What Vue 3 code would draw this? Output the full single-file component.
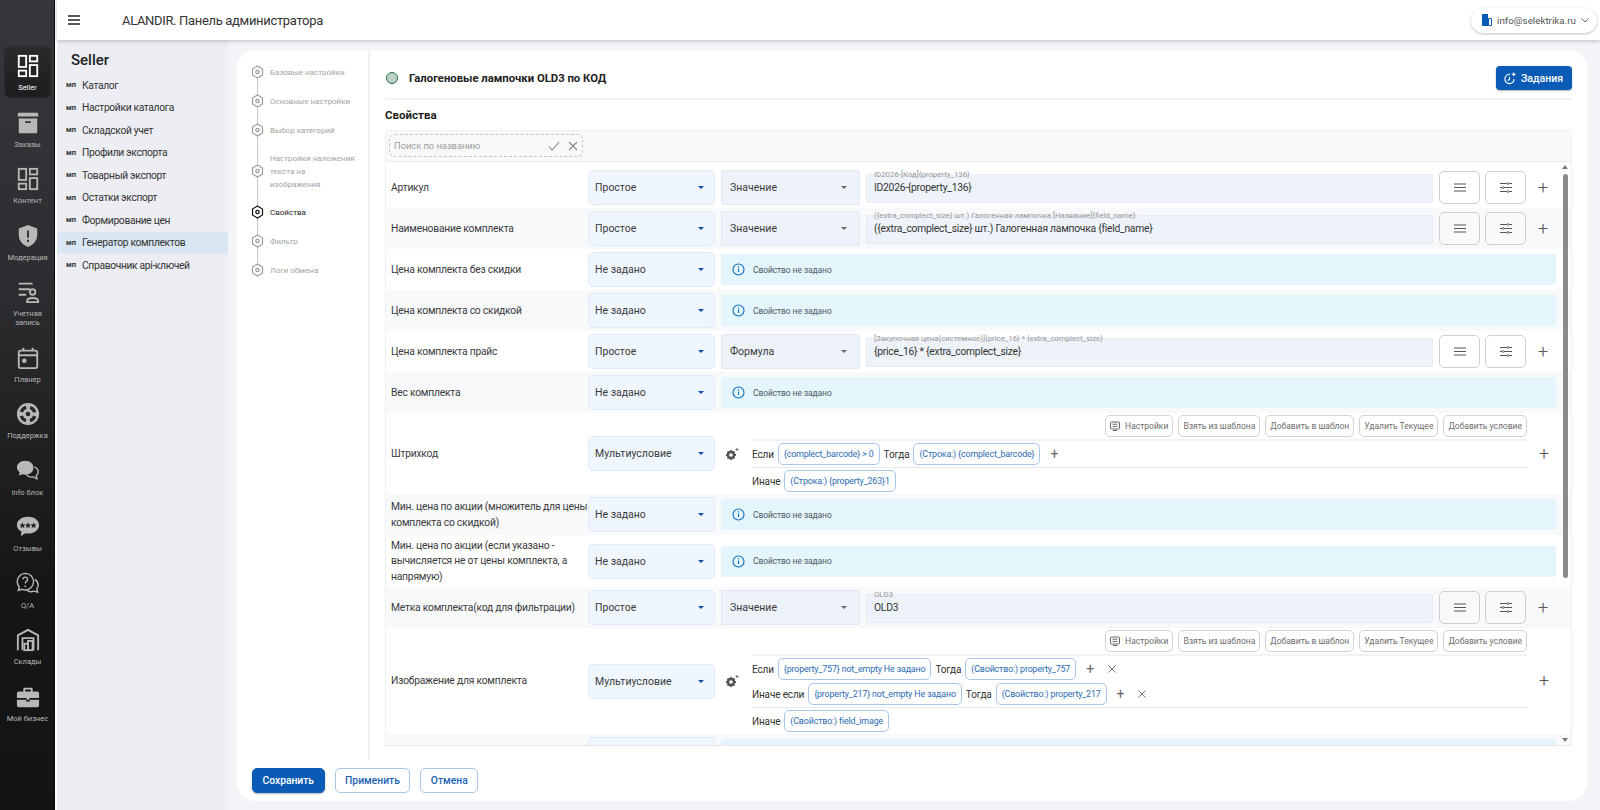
<script setup>
const railItems = [
  { label: 'Seller', icon: 'grid', active: true },
  { label: 'Заказы', icon: 'box' },
  { label: 'Контент', icon: 'grid' },
  { label: 'Модерация', icon: 'shield' },
  { label: 'Учетная запись', icon: 'account', two: true },
  { label: 'Планер', icon: 'calendar' },
  { label: 'Поддержка', icon: 'buoy' },
  { label: 'info блок', icon: 'chat' },
  { label: 'Отзывы', icon: 'stars' },
  { label: 'Q/A', icon: 'qa' },
  { label: 'Склады', icon: 'store' },
  { label: 'Мой бизнес', icon: 'case' },
]

const icons = {
  grid: '<g fill="none" stroke="currentColor" stroke-width="2"><rect x="3" y="2" width="8" height="12"/><rect x="15" y="2" width="8" height="6"/><rect x="3" y="18" width="8" height="6"/><rect x="15" y="12" width="8" height="12"/></g>',
  box: '<path fill="currentColor" d="M3 2h20a1 1 0 0 1 1 1v3H2V3a1 1 0 0 1 1-1zM3 8h20v15a1 1 0 0 1-1 1H4a1 1 0 0 1-1-1zM10 11v2h6v-2z" fill-rule="evenodd"/>',
  shield: '<path fill="currentColor" fill-rule="evenodd" d="M13 1l10 4v7c0 6-4 10.500-10 13C7 22.500 3 18 3 12V5zM12 7v8h2V7zM12 17v2.500h2V17z"/>',
  account: '<path fill="currentColor" d="M3 3h15v2H3zM3 9h12v2H3zM3 15h8v2H3z"/><circle cx="18" cy="13" r="3" fill="none" stroke="currentColor" stroke-width="2"/><path fill="none" stroke="currentColor" stroke-width="2" d="M12 24v-1c0-2 2-3.500 6-3.500s6 1.500 6 3.500v1z"/>',
  calendar: '<path fill="none" stroke="currentColor" stroke-width="2" d="M5 5h16a2 2 0 0 1 2 2v15a2 2 0 0 1-2 2H5a2 2 0 0 1-2-2V7a2 2 0 0 1 2-2zM3 10h20M8 2v4M18 2v4"/><circle cx="9" cy="16" r="2.500" fill="currentColor"/>',
  buoy: '<circle cx="13" cy="13" r="12" fill="currentColor"/><circle cx="13" cy="13" r="7.500" fill="none" stroke="#28282a" stroke-width="3.500" stroke-dasharray="7.500 4.280" stroke-dashoffset="-2.140"/><circle cx="13" cy="13" r="2.500" fill="#28282a"/>',
  chat: '<path fill="currentColor" d="M10 2c5 0 9 3 9 7.500S15 17 10 17c-1 0-2-.1-3-.4L3 18l1-3.500C2.500 13 1 11.500 1 9.500 1 5 5 2 10 2z"/><path fill="none" stroke="currentColor" stroke-width="1.500" d="M20 8.500c2.500 1 4 3 4 5.500 0 1.700-.7 3-2 4l.7 3.500-4-2c-3 .5-6-.5-7.500-2.500"/>',
  stars: '<path fill="currentColor" d="M13 2c6.500 0 12 3.800 12 9s-5.500 9-12 9c-1 0-2-.1-3-.3L5 23l1-5c-3-1.500-5-4-5-7C1 5.800 6.500 2 13 2z"/><path fill="#222" d="M7 8l1 2.200 2.300.2-1.800 1.500.6 2.300L7 13l-2.100 1.200.6-2.300-1.800-1.500 2.300-.2zM13 8l1 2.200 2.300.2-1.800 1.500.6 2.300L13 13l-2.100 1.200.6-2.300-1.800-1.500 2.300-.2zM19 8l1 2.200 2.300.2-1.800 1.500.6 2.300L19 13l-2.100 1.200.6-2.300-1.800-1.500 2.300-.2z"/>',
  qa: '<g fill="none" stroke="currentColor" stroke-width="1.500"><path d="M10 1.500a9 9 0 0 1 0 18c-1.200 0-2.400-.2-3.500-.7L2.500 20l1-3.800A9 9 0 0 1 10 1.500z"/><path d="M20.500 8c2 1.500 3.500 3.500 3.500 6 0 1.700-.6 3-1.500 4.200L23.500 22l-4-1.200c-3 1-6 .5-8-1.300"/><path d="M7.500 8a2.500 2.500 0 1 1 3.800 2.200c-.8.500-1.300 1-1.300 2.200"/></g><circle cx="10" cy="15.500" r="1" fill="currentColor"/>',
  store: '<g fill="none" stroke="currentColor" stroke-width="2"><path d="M2 24V8l11-6 11 6v16"/><path d="M7 24V11h12v13"/><rect x="9" y="17" width="4" height="7"/><rect x="13" y="14" width="5" height="10"/></g>',
  case: '<path fill="currentColor" fill-rule="evenodd" d="M9 3h8a1 1 0 0 1 1 1v3h5a2 2 0 0 1 2 2v5H1V9a2 2 0 0 1 2-2h5V4a1 1 0 0 1 1-1zM10 5v2h6V5zM1 16h10v2h4v-2h10v6a2 2 0 0 1-2 2H3a2 2 0 0 1-2-2z"/><rect x="11.500" y="13" width="3" height="3" fill="currentColor"/>',
}

const menu = [
  'Каталог', 'Настройки каталога', 'Складской учет', 'Профили экспорта', 'Товарный экспорт',
  'Остатки экспорт', 'Формирование цен', 'Генератор комплектов', 'Справочник api-ключей',
]

const steps = [
  { text: 'Базовые настройки' },
  { text: 'Основные настройки' },
  { text: 'Выбор категорий' },
  { text: 'Настройки наложения\nтекста на\nизображения', tall: true },
  { text: 'Свойства', current: true },
  { text: 'Фильтр' },
  { text: 'Логи обмена' },
]

const topButtons = ['Взять из шаблона', 'Добавить в шаблон', 'Удалить Текущее', 'Добавить условие']

const rows = [
  { label: 'Артикул', mode: 'Простое', type: 'Значение', legend: 'ID2026-[Код]{property_136}', value: 'ID2026-{property_136}', cls: 'first' },
  { label: 'Наименование комплекта', mode: 'Простое', type: 'Значение', legend: '({extra_complect_size} шт.) Галогенная лампочка [Название]{field_name}', value: '({extra_complect_size} шт.) Галогенная лампочка {field_name}' },
  { label: 'Цена комплекта без скидки', mode: 'Не задано' },
  { label: 'Цена комплекта со скидкой', mode: 'Не задано' },
  { label: 'Цена комплекта прайс', mode: 'Простое', type: 'Формула', legend: '[Закупочная цена(системное)]{price_16} * {extra_complect_size}', value: '{price_16} * {extra_complect_size}' },
  { label: 'Вес комплекта', mode: 'Не задано' },
  {
    label: 'Штрихкод', mode: 'Мультиусловие', cls: 'multi-a',
    conds: [{ word: 'Если', chip: '{complect_barcode} > 0', then: '(Строка:) {complect_barcode}' }],
    otherwise: '(Строка:) {property_263}1',
  },
  { label: 'Мин. цена по акции (множитель для цены комплекта со скидкой)', mode: 'Не задано' },
  { label: 'Мин. цена по акции (если указано - вычисляется не от цены комплекта, а напрямую)', mode: 'Не задано', cls: 'three' },
  { label: 'Метка комплекта(код для фильтрации)', mode: 'Простое', type: 'Значение', legend: 'OLD3', value: 'OLD3' },
  {
    label: 'Изображение для комплекта', mode: 'Мультиусловие', cls: 'multi-b',
    conds: [
      { word: 'Если', chip: '{property_757} not_empty Не задано', then: '(Свойство:) property_757', remove: true },
      { word: 'Иначе если', chip: '{property_217} not_empty Не задано', then: '(Свойство:) property_217', remove: true },
    ],
    otherwise: '(Свойство:) field_image',
  },
  { label: 'Значение для комплекта из нескольких разных товаров', mode: 'Не задано', cls: 'tail' },
]
</script>

<template>
  <div class="page">
    <aside class="rail">
      <div v-for="item in railItems" :key="item.label" class="rail-item" :class="{ active: item.active, two: item.two }">
        <svg class="rail-icon" viewBox="0 0 26 26" v-html="icons[item.icon]"></svg>
        <span>{{ item.label }}</span>
      </div>
    </aside>

    <div class="right">
      <header class="topbar">
        <svg class="burger" viewBox="0 0 12 10"><path d="M0 1h12M0 5h12M0 9h12" stroke="#222" stroke-width="1.300" /></svg>
        <div class="app-title">ALANDIR. Панель администратора</div>
        <div class="user">
          <svg width="10" height="12" viewBox="0 0 10 12"><path fill="#0a5bb5" d="M0 0h6v12H0z" /><path fill="none" stroke="#0a5bb5" d="M6.500 4.500h3v7h-3z" /></svg>
          <span>info@selektrika.ru</span>
          <svg width="8" height="5" viewBox="0 0 8 5"><path d="M.5.5L4 4 7.500.5" fill="none" stroke="#666" /></svg>
        </div>
      </header>

      <div class="body">
        <nav class="side">
          <div class="side-title">Seller</div>
          <div v-for="m in menu" :key="m" class="side-item" :class="{ active: m === 'Генератор комплектов' }">
            <b>мп</b><span>{{ m }}</span>
          </div>
        </nav>

        <main class="main">
          <div class="card">
            <div class="card-top">
              <div class="stepper">
                <div v-for="s in steps" :key="s.text" class="step" :class="{ tall: s.tall, current: s.current }">
                  <svg class="hex" width="13" height="14" viewBox="0 0 13 14">
                    <path d="M6.500 1l5 3v6l-5 3-5-3V4z" fill="#fff" stroke="currentColor" stroke-width="1.200" />
                    <circle cx="6.500" cy="7" r="1.700" fill="none" stroke="currentColor" stroke-width="1.200" />
                  </svg>
                  <span>{{ s.text }}</span>
                </div>
              </div>

              <section class="content">
                <div class="title-row">
                  <i class="status"></i>
                  <h1>Галогеновые лампочки OLD3 по КОД</h1>
                  <button class="tasks">
                    <svg width="13" height="13" viewBox="0 0 14 14" fill="none" stroke="#fff" stroke-width="1.200">
                      <path d="M7.500 2.500a5 5 0 1 0 4.500 5M7 5v3l-2 1.200M11.500 .5v4M9.500 2.500h4" />
                    </svg>
                    Задания
                  </button>
                </div>
                <h2>Свойства</h2>

                <div class="table">
                  <div class="search-row">
                    <div class="search">
                      <span>Поиск по названию</span>
                      <svg width="12" height="10" viewBox="0 0 12 10"><path d="M1 5.500L4.200 9 11 1" fill="none" stroke="#888" stroke-width="1.100" /></svg>
                      <svg width="10" height="10" viewBox="0 0 10 10"><path d="M1 1l8 8M9 1L1 9" stroke="#888" stroke-width="1.100" /></svg>
                    </div>
                  </div>

                  <div class="rows">
                    <div v-for="r in rows" :key="r.label" class="row" :class="r.cls">
                      <div class="label">{{ r.label }}</div>
                      <div class="select mode">{{ r.mode }}<i class="caret"></i></div>

                      <div v-if="r.type" class="cells">
                        <div class="select type">{{ r.type }}<i class="caret grey"></i></div>
                        <fieldset class="field">
                          <legend>{{ r.legend }}</legend>
                          <div class="field-value">{{ r.value }}</div>
                        </fieldset>
                        <button class="square">
                          <svg width="12" height="9" viewBox="0 0 12 9"><path d="M0 1h12M0 4.500h12M0 8h12" stroke="#555" stroke-width="1" /></svg>
                        </button>
                        <button class="square">
                          <svg width="12" height="11" viewBox="0 0 12 11"><path d="M0 1.500h7M9 1.500h3M0 5.500h2M4 5.500h8M0 9.500h7M9 9.500h3M8 0v3M3 4v3M8 8v3" stroke="#555" stroke-width="1" /></svg>
                        </button>
                        <div class="plus">+</div>
                      </div>

                      <div v-else-if="r.conds" class="cells">
                        <svg class="gear" width="14" height="14" viewBox="0 0 14 14">
                          <circle cx="6" cy="8" r="3" fill="none" stroke="#555" stroke-width="2.400" />
                          <path d="M6 3v1.500M6 11.500V13M1 8h1.500M9.500 8H11M2.500 4.500l1 1M8.500 10.500l1 1M9.500 4.500l-1 1M3.500 10.500l-1 1" stroke="#555" stroke-width="1.800" />
                          <path d="M12 1v3M10.500 2.500h3" stroke="#555" stroke-width=".8" />
                        </svg>
                        <div class="multi">
                          <div class="multi-top">
                            <button class="mini">
                              <svg width="10" height="10" viewBox="0 0 10 10" fill="none" stroke="#666"><rect x=".5" y="1" width="9" height="7" rx="1" /><path d="M2.500 3.200h5M2.500 5.400h5M3 9.500h4" /></svg>
                              Настройки
                            </button>
                            <button v-for="b in topButtons" :key="b" class="mini">{{ b }}</button>
                          </div>
                          <div class="cond-group">
                            <div v-for="c in r.conds" :key="c.chip" class="cond">
                              <span>{{ c.word }}</span>
                              <div class="chip">{{ c.chip }}</div>
                              <span class="then">Тогда</span>
                              <div class="chip">{{ c.then }}</div>
                              <span class="act">+</span>
                              <svg v-if="c.remove" class="act-x" width="8" height="8" viewBox="0 0 8 8"><path d="M.5.5l7 7M7.500.5l-7 7" stroke="#666" stroke-width=".9" /></svg>
                            </div>
                          </div>
                          <div class="cond otherwise">
                            <span>Иначе</span>
                            <div class="chip">{{ r.otherwise }}</div>
                          </div>
                        </div>
                        <div class="plus">+</div>
                      </div>

                      <div v-else class="info">
                        <svg width="13" height="13" viewBox="0 0 13 13" fill="none" stroke="#0a6fc2" stroke-width="1.100">
                          <circle cx="6.500" cy="6.500" r="5.500" /><path d="M6.500 5.500v3.500M6.500 3.300v1.100" />
                        </svg>
                        Свойство не задано
                      </div>
                    </div>

                    <div class="scrollbar">
                      <i class="arrow up"></i>
                      <i class="thumb"></i>
                      <i class="arrow down"></i>
                    </div>
                  </div>
                </div>
              </section>
            </div>

            <footer class="actions">
              <button class="btn primary">Сохранить</button>
              <button class="btn">Применить</button>
              <button class="btn">Отмена</button>
            </footer>
          </div>
        </main>
      </div>
    </div>
  </div>
</template>

<style scoped>
.page {
  display: flex;
  width: 1600px;
  height: 810px;
  overflow: hidden;
  font-family: Roboto, "Noto Sans", sans-serif;
  color: #2e2e30;
}
button {
  font-family: inherit;
  cursor: pointer;
}

/* rail */
.rail {
  width: 55px;
  flex: none;
  box-sizing: content-box;
  border-right: 2px solid #fff;
  padding-top: 47px;
  background: linear-gradient(#36373b 0, #2c2d30 35%, #161616 72%, #141414 100%);
  display: flex;
  flex-direction: column;
  gap: 6.5px;
  box-shadow: inset -1px 0 0 #0c0c0c;
}
.rail-item {
  margin: 0 5px;
  height: 50px;
  display: flex;
  flex-direction: column;
  align-items: center;
  padding-top: 7px;
  box-sizing: border-box;
  color: #b8b8b8;
  font-size: 7.500px;
  line-height: 9px;
  text-align: center;
  white-space: nowrap;
}
.rail-item.two {
  height: 59px;
  white-space: normal;
}
.rail-item.active {
  background: linear-gradient(#2a2a2d, #1d1d1f);
  border-radius: 5px;
  color: #fff;
  box-shadow: 0 0 2px rgba(0, 0, 0, 0.6);
}
.rail-icon {
  width: 24px;
  height: 24px;
  flex: none;
  margin-bottom: 5px;
}

/* header */
.right {
  flex: 1;
  min-width: 0;
  display: flex;
  flex-direction: column;
}
.topbar {
  height: 40px;
  flex: none;
  background: #fff;
  display: flex;
  align-items: center;
  padding: 0 3px 0 11px;
  box-shadow: 0 1px 4px rgba(60, 60, 70, 0.3);
  position: relative;
}
.burger {
  width: 12px;
  height: 10px;
}
.app-title {
  margin-left: 42px;
  font-size: 13px;
  letter-spacing: -0.33px;
  color: #333;
}
.user {
  margin-left: auto;
  height: 25px;
  width: 126px;
  box-sizing: border-box;
  border-radius: 13px;
  box-shadow: 0 1px 3px rgba(0, 0, 0, 0.25);
  display: flex;
  align-items: center;
  gap: 5px;
  padding: 0 10px 0 11px;
  font-size: 9.800px;
  color: #555;
}
.user svg {
  flex: none;
}
.user span {
  flex: 1;
}

/* sidebar */
.body {
  flex: 1;
  display: flex;
  min-height: 0;
}
.side {
  width: 171px;
  flex: none;
  background: #eceef3;
  padding-top: 9px;
  box-sizing: border-box;
}
.side-title {
  font-size: 15px;
  font-weight: 500;
  padding-left: 14px;
  height: 25px;
  line-height: 22px;
  color: #1f1f1f;
}
.side-item {
  height: 22.5px;
  display: flex;
  align-items: center;
  padding-left: 9px;
  font-size: 10.300px;
  letter-spacing: -0.35px;
  color: #333;
}
.side-item b {
  width: 16px;
  font-size: 7.5px;
  line-height: 8px;
  letter-spacing: 0;
}
.side-item.active {
  background: #dbe6f3;
}

/* card */
.main {
  flex: 1;
  min-width: 0;
  background: #f3f4f8;
  padding: 10px 13px 9px 9px;
  box-sizing: border-box;
}
.card {
  height: 751px;
  background: #fff;
  border-radius: 18px;
  display: flex;
  flex-direction: column;
}
.card-top {
  height: 710px;
  display: flex;
}
.stepper {
  width: 133px;
  flex: none;
  box-sizing: border-box;
  border-right: 2px solid #f0f1f4;
  padding: 7.5px 0 0 14px;
}
.step {
  height: 29px;
  display: flex;
  align-items: center;
  gap: 6px;
  font-size: 8px;
  line-height: 13px;
  color: #a3a3a3;
  position: relative;
  white-space: pre-line;
}
.step.tall {
  height: 53px;
}
.step.current {
  color: #1c1c1c;
}
.step::before {
  content: "";
  position: absolute;
  left: 6px;
  top: 0;
  bottom: 0;
  width: 1px;
  background: #c9c9c9;
}
.step:first-child::before {
  top: 50%;
}
.step:last-child::before {
  bottom: 50%;
}
.hex {
  flex: none;
  color: #9c9c9c;
  position: relative;
}
.step.current .hex {
  color: #111;
}

.content {
  flex: 1;
  min-width: 0;
  padding: 0 15px;
}
.title-row {
  height: 50px;
  box-sizing: border-box;
  border-bottom: 2px solid #f1f2f5;
  display: flex;
  align-items: center;
  padding: 12px 0 4px 1px;
}
.status {
  width: 10px;
  height: 10px;
  border-radius: 50%;
  background: #bcd2c2;
  border: 1.5px solid #2f6d45;
  margin: 0 11px 0 0;
}
h1 {
  margin: 0;
  font-size: 11.300px;
  font-weight: 700;
  color: #222;
}
.tasks {
  margin-left: auto;
  width: 76px;
  height: 24px;
  border: 0;
  border-radius: 4px;
  background: #0a5bb5;
  color: #fff;
  font-size: 10.5px;
  font-weight: 500;
  display: flex;
  align-items: center;
  justify-content: center;
  gap: 5px;
  padding: 0 2px 0 0;
  box-shadow: 0 1px 2px rgba(0, 0, 0, 0.3);
}
h2 {
  margin: 0;
  height: 30px;
  line-height: 30px;
  font-size: 11.500px;
  font-weight: 700;
  color: #222;
}

/* table */
.table {
  border: 1px solid #eef0f4;
  border-bottom: 0;
}
.search-row {
  height: 31px;
  box-sizing: border-box;
  background: #f8f9fb;
  border-bottom: 1px solid #e9ebef;
  padding: 3px;
}
.search {
  width: 194px;
  height: 23px;
  box-sizing: border-box;
  border: 1.5px dashed #c4c4c8;
  border-radius: 6px;
  display: flex;
  align-items: center;
  padding: 0 4px;
  gap: 8px;
  font-size: 9.300px;
  color: #9b9b9b;
}
.search span {
  flex: 1;
}
.rows {
  height: 583px;
  overflow: hidden;
  position: relative;
  border-bottom: 1px solid #e6e8ec;
}
.row {
  height: 41px;
  box-sizing: border-box;
  display: flex;
  align-items: center;
  padding-left: 5px;
  background: #fff;
}
.row:nth-child(even) {
  background: #f8f9fb;
}
.row.first {
  height: 46px;
  padding-top: 5px;
}
.row.three {
  height: 52px;
}
.row.multi-a {
  height: 81px;
}
.row.multi-b {
  height: 106px;
}
.row.tail .label {
  padding-top: 6px;
}
.label {
  width: 197px;
  flex: none;
  box-sizing: border-box;
  font-size: 10.300px;
  letter-spacing: -0.22px;
  line-height: 15.500px;
  color: #3a3a3c;
}
.select {
  height: 35px;
  flex: none;
  box-sizing: border-box;
  display: flex;
  align-items: center;
  justify-content: space-between;
  border-radius: 4px;
  font-size: 10.500px;
  color: #3a3a3c;
}
.mode {
  width: 127px;
  margin-right: 6px;
  background: #f0f6fe;
  border: 1px solid #dfeafa;
  padding: 0 10px 0 6px;
  border-radius: 5px;
}
.type {
  width: 139px;
  background: #eef2f9;
  border: 1px solid #e2e8f3;
  padding: 0 12px 0 8px;
  border-radius: 2px;
}
.caret {
  width: 0;
  height: 0;
  border: 3px solid transparent;
  border-top: 3.5px solid #0a4fa8;
  border-bottom: 0;
}
.caret.grey {
  border-top-color: #666;
}
.cells {
  display: flex;
  align-items: center;
  flex: none;
}
.field {
  width: 567px;
  height: 32px;
  box-sizing: border-box;
  margin: -2px 0 0 6px;
  padding: 0 0 0 7px;
  background: #eef3fa;
  border: 1.5px solid #e3ebf6;
  border-radius: 2px;
  min-width: 0;
}
.field legend {
  font-size: 7.800px;
  line-height: 7px;
  color: #969696;
  padding: 0 2px 0 0;
}
.field-value {
  font-size: 10.300px;
  letter-spacing: -0.25px;
  line-height: 20px;
  color: #333;
}
.square {
  width: 41px;
  height: 33px;
  margin-left: 6px;
  padding: 0;
  background: transparent;
  border: 1px solid #cfcfcf;
  border-radius: 5px;
  display: flex;
  align-items: center;
  justify-content: center;
}
.square + .square {
  margin-left: 5px;
}
.plus {
  width: 34px;
  text-align: center;
  font-size: 18px;
  line-height: 18px;
  font-weight: 300;
  color: #555;
}
.info {
  width: 835px;
  height: 31px;
  flex: none;
  box-sizing: border-box;
  background: #e5f5fc;
  border-radius: 2px;
  display: flex;
  align-items: center;
  gap: 8px;
  padding-left: 11px;
  font-size: 8.500px;
  letter-spacing: -0.1px;
  color: #4d5b66;
}
.gear {
  flex: none;
  margin: 0 13px 0 4px;
}
.multi {
  width: 775px;
  flex: none;
}
.multi-top {
  display: flex;
  justify-content: flex-end;
  gap: 5px;
  padding-bottom: 2px;
  border-bottom: 2px solid #f1f2f4;
}
.mini {
  height: 22px;
  padding: 0 4px;
  background: #fff;
  border: 1px solid #d2d2d2;
  border-radius: 5px;
  font-size: 8.500px;
  color: #6e6e6e;
  display: flex;
  align-items: center;
  gap: 5px;
}
.cond-group {
  padding: 2px 0;
  border-bottom: 1px solid #e8e9ec;
}
.cond {
  height: 22px;
  display: flex;
  align-items: center;
  font-size: 10px;
  letter-spacing: -0.15px;
  color: #333;
}
.cond + .cond {
  margin-top: 3px;
}
.cond.otherwise {
  margin-top: 2px;
}
.chip {
  height: 21.500px;
  box-sizing: border-box;
  padding: 0 5px;
  margin: 0 4px;
  display: flex;
  align-items: center;
  background: #fff;
  border: 1px solid #a9c6ea;
  border-radius: 5px;
  font-size: 8.900px;
  letter-spacing: -0.15px;
  color: #2b6bb3;
  white-space: nowrap;
}
.act {
  margin-left: 6px;
  font-size: 14px;
  color: #666;
}
.act-x {
  margin-left: 14px;
}
.scrollbar {
  position: absolute;
  top: 0;
  bottom: 0;
  right: 3px;
  width: 6px;
  display: flex;
  flex-direction: column;
  align-items: center;
}
.thumb {
  width: 5px;
  height: 404px;
  margin-top: 5px;
  background: #8b8b8b;
  border-radius: 3px;
}
.arrow {
  width: 0;
  height: 0;
  border: 3px solid transparent;
}
.arrow.up {
  border-top: 0;
  border-bottom: 4px solid #777;
  margin-top: 3px;
}
.arrow.down {
  border-bottom: 0;
  border-top: 4px solid #777;
  margin-top: auto;
  margin-bottom: 3px;
}

/* footer */
.actions {
  display: flex;
  gap: 10px;
  padding: 8px 0 0 15px;
}
.btn {
  height: 25px;
  padding: 0 9.5px;
  background: #fff;
  border: 1px solid #a9c6ea;
  border-radius: 5px;
  color: #1e62b5;
  font-size: 10.300px;
  font-weight: 500;
}
.btn.primary {
  background: #0a5bb5;
  border-color: #0a5bb5;
  color: #fff;
  box-shadow: 0 1px 2px rgba(0, 0, 0, 0.3);
}
</style>
